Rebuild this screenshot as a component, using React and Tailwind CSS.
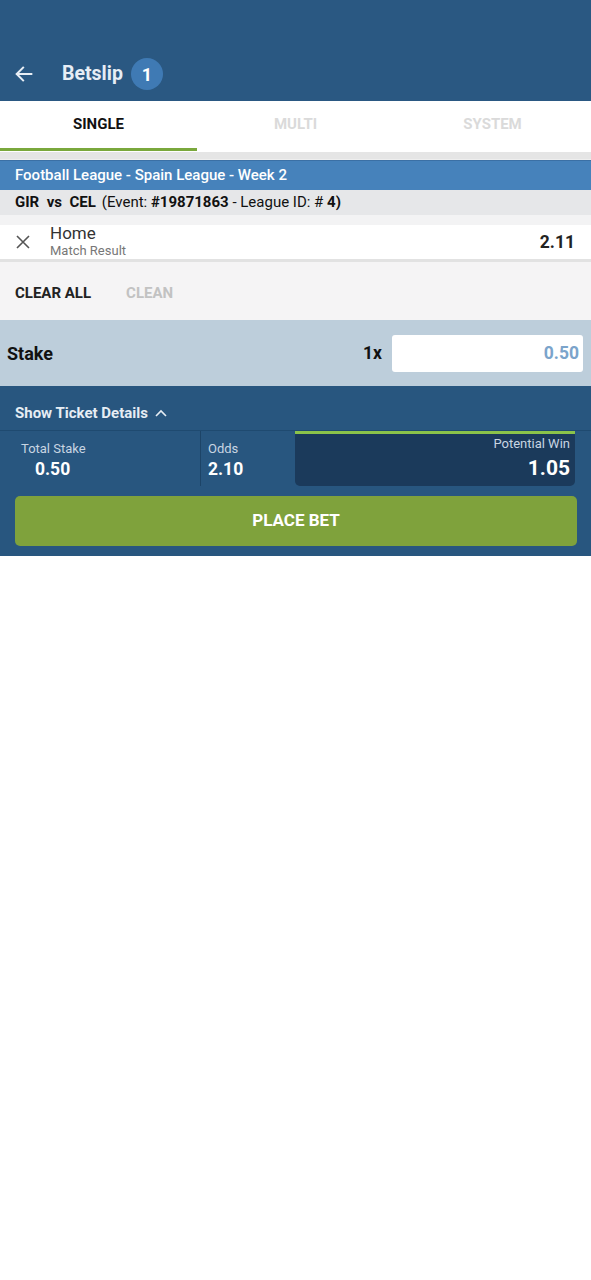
import React from "react";

export default function App() {
  return (
    <div className="w-[591px] bg-white" style={{ fontFamily: "Roboto, 'Liberation Sans', sans-serif" }}>
      {/* Header */}
      <div className="h-[101px] bg-[#2a5882] flex items-end">
        <div className="h-[54px] w-full flex items-center">
          <svg className="ml-[13px]" width="22" height="22" viewBox="0 0 24 24" fill="none" stroke="#e8eef5" strokeWidth="2.2" strokeLinecap="square">
            <path d="M20 12H5" />
            <path d="M11 5l-7 7 7 7" />
          </svg>
          <span className="ml-[27px] text-[19.5px] font-bold text-[#e6edf5]">Betslip</span>
          <span className="ml-[8px] w-[32px] h-[32px] rounded-full bg-[#3f7ab4] flex items-center justify-center text-[18px] font-bold text-white">1</span>
        </div>
      </div>

      {/* Tabs */}
      <div className="h-[51px] bg-white grid grid-cols-3">
        <div className="relative flex items-center justify-center pb-[4px] text-[15px] font-bold text-[#111]">
          SINGLE
          <div className="absolute left-0 right-0 bottom-[1px] h-[3px] bg-[#7aa83c]" />
        </div>
        <div className="flex items-center justify-center pb-[4px] text-[15px] font-bold text-[#dadada]">MULTI</div>
        <div className="flex items-center justify-center pb-[4px] text-[15px] font-bold text-[#dadada]">SYSTEM</div>
      </div>
      <div className="h-[8px] bg-[#e5e5e5] border-b border-[#eeeeee]" />

      {/* League bar */}
      <div className="h-[30px] bg-[#4682bb] border-t border-[#3b70a5] flex items-center pl-[15px] text-[15px] font-medium text-white">
        Football League - Spain League - Week 2
      </div>
      <div className="h-[25px] bg-[#e6e7e9] flex items-center pl-[15px] text-[15px] text-[#111]">
        <span className="font-bold">GIR&nbsp; vs&nbsp; CEL</span>
        <span className="ml-[6px]">(Event:&nbsp;</span>
        <span className="font-bold">#19871863</span>
        <span>&nbsp;- League ID: #&nbsp;</span>
        <span className="font-bold">4)</span>
      </div>
      <div className="h-[10px] bg-[#f3f3f4]" />

      {/* Selection */}
      <div className="h-[34px] bg-white flex items-center">
        <svg className="ml-[16px]" width="14" height="14" viewBox="0 0 14 14" stroke="#555" strokeWidth="1.6">
          <path d="M1 1l12 12M13 1L1 13" />
        </svg>
        <div className="ml-[20px] mb-[2px] flex flex-col leading-none">
          <span className="text-[17px] text-[#333]">Home</span>
          <span className="text-[13px] text-[#777] mt-[2px]">Match Result</span>
        </div>
        <span className="ml-auto mr-[16px] text-[17.5px] font-bold text-[#222]">2.11</span>
      </div>
      <div className="h-[3px] bg-[#e2e2e2]" />

      {/* Clear row */}
      <div className="h-[58px] bg-[#f5f4f5] flex items-center pl-[15px] pt-[4px] text-[15px] font-bold">
        <span className="text-[#222]">CLEAR ALL</span>
        <span className="ml-[35px] text-[#c2c2c2]">CLEAN</span>
      </div>

      {/* Stake */}
      <div className="h-[66px] bg-[#bdcedb] flex items-center">
        <span className="ml-[7px] text-[18px] font-bold text-[#111]">Stake</span>
        <span className="ml-auto text-[17.5px] font-bold text-[#111]">1x</span>
        <div className="ml-[10px] mr-[8px] w-[191px] h-[37px] bg-white rounded-[3px] flex items-center justify-end pr-[4px] text-[17.5px] font-bold text-[#7ba4cb]">
          0.50
        </div>
      </div>

      {/* Ticket */}
      <div className="bg-[#28567f]">
        <div className="h-[45px] flex items-center pl-[15px] pt-[10px] text-[15px] font-bold text-[#e6edf4] border-b border-[#1f4a70]">
          Show Ticket Details
          <svg className="ml-[6px]" width="14" height="14" viewBox="0 0 14 14" fill="none" stroke="#e6edf4" strokeWidth="1.6">
            <path d="M2 10l5-5 5 5" />
          </svg>
        </div>
        <div className="h-[55px] flex">
          <div className="w-[201px] border-r border-[#1d4467] pl-[21px] pt-[11px]">
            <div className="text-[13px] text-[#c8d5e2] leading-none">Total Stake</div>
            <div className="ml-[14px] mt-[6px] text-[17.5px] font-bold text-white leading-none">0.50</div>
          </div>
          <div className="w-[94px] pl-[7px] pt-[11px]">
            <div className="text-[13px] text-[#c8d5e2] leading-none">Odds</div>
            <div className="mt-[6px] text-[17.5px] font-bold text-white leading-none">2.10</div>
          </div>
          <div className="w-[280px] bg-[#1b3a5b] border-t-[3px] border-[#8bc34a] rounded-b-[5px] flex flex-col items-end pr-[5px] pt-[3px]">
            <div className="text-[13px] text-[#c8d5e2] leading-none">Potential Win</div>
            <div className="mt-[8px] text-[21px] font-bold text-white leading-none">1.05</div>
          </div>
        </div>
        <div className="px-[15px] pt-[10px] pb-[10px] pr-[14px]">
          <div className="h-[50px] bg-[#7fa23c] rounded-[5px] flex items-center justify-center text-[17px] font-bold text-white">
            PLACE BET
          </div>
        </div>
      </div>
    </div>
  );
}
